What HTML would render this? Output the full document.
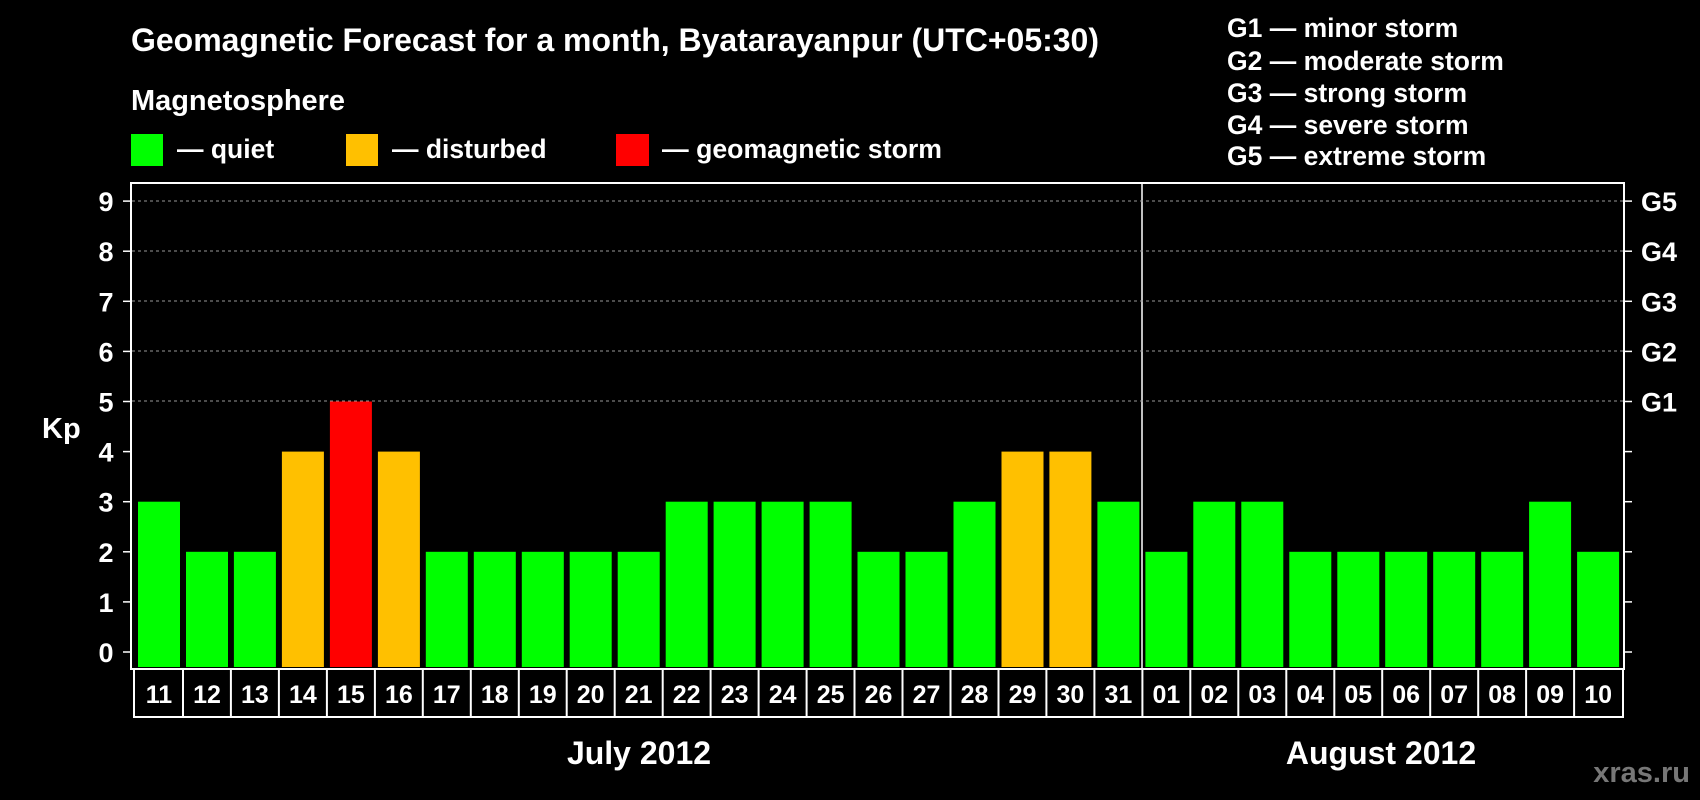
<!DOCTYPE html><html><head><style>html,body{margin:0;background:#000;width:1700px;height:800px;overflow:hidden}</style></head><body>
<svg width="1700" height="800" xmlns="http://www.w3.org/2000/svg" font-family="Liberation Sans, Arial, sans-serif" font-weight="bold" fill="#fff">
<rect width="1700" height="800" fill="#000"/>
<text x="131" y="51" font-size="32" textLength="968" lengthAdjust="spacingAndGlyphs">Geomagnetic Forecast for a month, Byatarayanpur (UTC+05:30)</text>
<text x="131" y="110" font-size="29" textLength="214" lengthAdjust="spacingAndGlyphs">Magnetosphere</text>
<rect x="131" y="134" width="32" height="32" fill="#00ff00"/><text x="177" y="158" font-size="26.5">— quiet</text>
<rect x="346" y="134" width="32" height="32" fill="#ffc000"/><text x="392" y="158" font-size="26.5">— disturbed</text>
<rect x="616" y="134" width="33" height="32" fill="#ff0000"/><text x="662" y="158" font-size="26.5" textLength="280" lengthAdjust="spacingAndGlyphs">— geomagnetic storm</text>
<g font-size="26.5">
<text x="1227" y="37">G1 — minor storm</text>
<text x="1227" y="70">G2 — moderate storm</text>
<text x="1227" y="102">G3 — strong storm</text>
<text x="1227" y="134">G4 — severe storm</text>
<text x="1227" y="165">G5 — extreme storm</text>
</g>
<g id="bars"></g>
<rect x="131" y="183" width="1493" height="486" fill="none" stroke="#fff" stroke-width="2"/>
<line x1="1142" y1="183" x2="1142" y2="669" stroke="#fff" stroke-width="1.5"/>
<g stroke="#999" stroke-dasharray="3,3" stroke-width="1">
<line x1="132" y1="201" x2="1623" y2="201"/><line x1="132" y1="251" x2="1623" y2="251"/><line x1="132" y1="301" x2="1623" y2="301"/><line x1="132" y1="351" x2="1623" y2="351"/><line x1="132" y1="401" x2="1623" y2="401"/>
</g>
<text x="42" y="438" font-size="29">Kp</text>
<text x="639" y="764" font-size="32" text-anchor="middle">July 2012</text>
<text x="1381" y="764" font-size="32" text-anchor="middle">August 2012</text>
<text x="1690" y="782" font-size="29" text-anchor="end" fill="#777">xras.ru</text>
<g id="axes"></g>
</svg>
<script>
var v=[3,2,2,4,5,4,2,2,2,2,2,3,3,3,3,2,2,3,4,4,3,2,3,3,2,2,2,2,2,3,2];
var d=["11","12","13","14","15","16","17","18","19","20","21","22","23","24","25","26","27","28","29","30","31","01","02","03","04","05","06","07","08","09","10"];
var s="";
for(var i=0;i<31;i++){var x=138+i*47.97,k=v[i],c=k>=5?"#ff0000":k==4?"#ffc000":"#00ff00",t=652-50.1*k;
s+='<rect x="'+x.toFixed(1)+'" y="'+t.toFixed(1)+'" width="42" height="'+(667-t).toFixed(1)+'" fill="'+c+'"/>';}
document.getElementById("bars").innerHTML=s;
var a='<rect x="134" y="669" width="1489" height="48" fill="none" stroke="#fff" stroke-width="2"/>';
for(var i=0;i<31;i++){var x=138+i*47.97;if(i>0)a+='<line x1="'+(x-3).toFixed(1)+'" y1="669" x2="'+(x-3).toFixed(1)+'" y2="717" stroke="#fff" stroke-width="2"/>';
a+='<text x="'+(x+21).toFixed(1)+'" y="703" font-size="25" text-anchor="middle">'+d[i]+'</text>';}
var g=["G1","G2","G3","G4","G5"];
for(var k=0;k<=9;k++){var y=652-50.1*k;a+='<line x1="123" y1="'+y+'" x2="131" y2="'+y+'" stroke="#fff" stroke-width="1.5"/><line x1="1624" y1="'+y+'" x2="1632" y2="'+y+'" stroke="#fff" stroke-width="1.5"/>';
a+='<text x="106" y="'+(y+10)+'" font-size="27" text-anchor="middle">'+k+'</text>';
if(k>=5)a+='<text x="1641" y="'+(y+10)+'" font-size="27">'+g[k-5]+'</text>';}
document.getElementById("axes").innerHTML=a;
</script>
</body></html>
